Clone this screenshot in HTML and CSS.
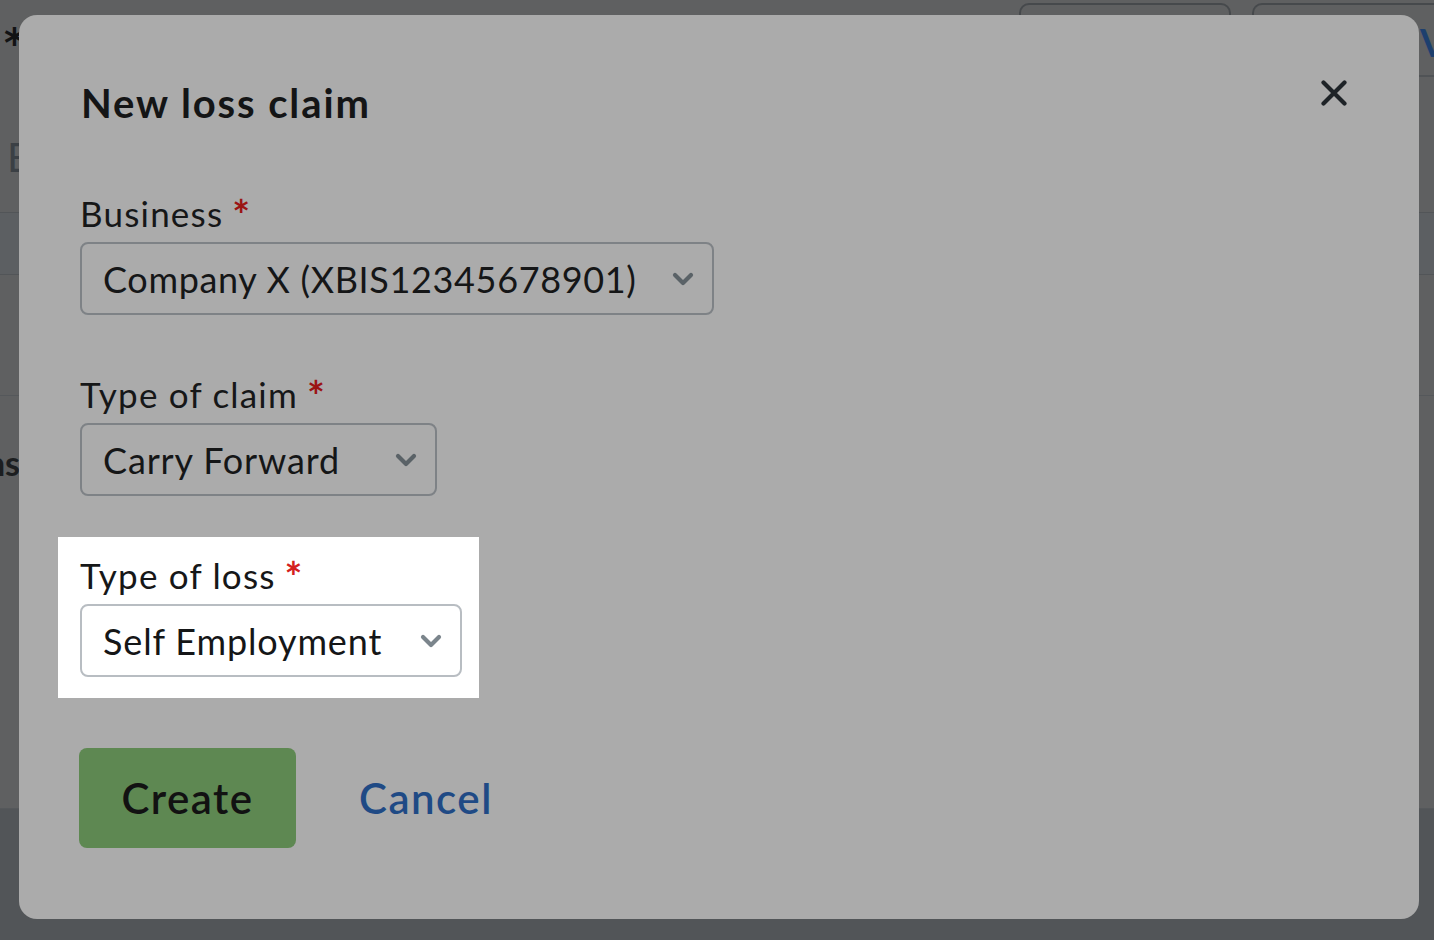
FILE: index.html
```html
<!DOCTYPE html>
<html lang="en">
<head>
    <meta charset="UTF-8">
    <meta name="viewport" content="width=device-width, initial-scale=1.0">
    <title>New loss claim</title>
    <link rel="stylesheet" href="styles.css">
</head>
<body>

<div class="page">
    <div class="page-head">
        <span class="req-mark">*</span>
        <div class="head-actions">
            <span class="ghost-btn">Download</span>
            <span class="ghost-btn link">View claims</span>
        </div>
    </div>
    <div class="page-title">Existing losses</div>
    <div class="table-head"></div>
    <div class="table-row"></div>
    <div class="table-row tall">
        <div class="cut-cell"><span>Actions</span></div>
    </div>
    <div class="page-foot"></div>
</div>

<div class="modal">
    <div class="modal-head">
        <h1>New loss claim</h1>
        <button class="close-btn" aria-label="Close">
            <svg width="26" height="26" viewBox="0 0 26 26">
                <path d="M2.5 2.5 L23.5 23.5 M23.5 2.5 L2.5 23.5" stroke="#1e2327" stroke-width="4.2" stroke-linecap="round" fill="none"/>
            </svg>
        </button>
    </div>

    <div class="field first">
        <label>Business<span class="star">*</span></label>
        <div class="select business">
            <span>Company X (XBIS12345678901)</span>
            <svg class="chevron" width="22" height="14" viewBox="0 0 22 14"><path d="M3 3 L11 11 L19 3" /></svg>
        </div>
    </div>

    <div class="field">
        <label>Type of claim<span class="star">*</span></label>
        <div class="select claim">
            <span>Carry Forward</span>
            <svg class="chevron" width="22" height="14" viewBox="0 0 22 14"><path d="M3 3 L11 11 L19 3" /></svg>
        </div>
    </div>

    <div class="field spotlight">
        <label>Type of loss<span class="star">*</span></label>
        <div class="select loss">
            <span>Self Employment</span>
            <svg class="chevron" width="22" height="14" viewBox="0 0 22 14"><path d="M3 3 L11 11 L19 3" /></svg>
        </div>
    </div>

    <div class="actions">
        <button class="create-btn">Create</button>
        <a class="cancel-link" href="#">Cancel</a>
    </div>
</div>

</body>
</html>
```

FILE: styles.css
```css
body {
    margin: 0;
    padding: 0;
    background-color: #5f6061;
    font-family: Lato, "Open Sans", Arial, sans-serif;
    overflow: hidden;
    height: 940px;
}

/* Page behind the dialog (dimmed) */
.page {
    width: 1434px;
    overflow: hidden;
}

.page-head {
    display: flex;
    align-items: flex-start;
    height: 77px;
    box-sizing: border-box;
    padding-top: 3px;
}

.req-mark {
    color: #121314;
    font-family: "DejaVu Sans", sans-serif;
    font-size: 40px;
    font-weight: bold;
    padding-left: 4px;
    line-height: 40px;
    margin-top: 20px;
}

.head-actions {
    margin-left: auto;
    display: flex;
    gap: 21px;
    margin-right: -40px;
}

.ghost-btn {
    width: 212px;
    height: 74px;
    box-sizing: border-box;
    border: 2px solid #46494c;
    border-radius: 10px;
    color: #2b2e31;
    font-size: 32px;
    padding: 12px 0 0 20px;
}

.ghost-btn.link {
    width: 222px;
    border-radius: 10px 0 0 0;
    border-right: none;
    border-bottom-color: #505356;
    color: #1d3f6e;
    font-weight: bold;
    font-size: 38px;
    padding: 14px 0 0 166px;
    white-space: nowrap;
    overflow: hidden;
}

.page-title {
    height: 135px;
    border-bottom: 1px solid #525558;
    color: #3b4045;
    font-size: 40px;
    line-height: 160px;
    padding-left: 7px;
    white-space: nowrap;
}

.table-head {
    height: 61px;
    background-color: #5c5f62;
    border-bottom: 1px solid #525558;
}

.table-row {
    height: 120px;
    border-bottom: 1px solid #55585b;
}

.table-row.tall {
    height: 412px;
}

.cut-cell {
    width: 20px;
    display: flex;
    justify-content: flex-end;
    overflow: hidden;
    padding-top: 46px;
}

.cut-cell span {
    color: #1c1e20;
    font-size: 34px;
    font-weight: bold;
    white-space: nowrap;
}

.page-foot {
    height: 140px;
    background-color: #525558;
}

/* Dialog */
.modal {
    position: fixed;
    left: 19px;
    top: 15px;
    width: 1400px;
    height: 904px;
    box-sizing: border-box;
    background-color: #ababab;
    border-radius: 18px;
    padding: 64px 62px 0 61px;
    display: flex;
    flex-direction: column;
    align-items: flex-start;
}

.modal-head {
    display: flex;
    align-items: flex-start;
    width: 100%;
}

.modal-head h1 {
    margin: 0 0 0 1px;
    font-size: 40px;
    line-height: 48px;
    font-weight: bold;
    letter-spacing: 1.9px;
    color: #141516;
}

.close-btn {
    margin-left: auto;
    margin-right: 10px;
    margin-top: 1px;
    padding: 0;
    border: none;
    background: none;
    width: 26px;
    height: 26px;
    cursor: pointer;
}

.close-btn svg {
    display: block;
}

.field {
    display: flex;
    flex-direction: column;
    align-items: flex-start;
    margin-top: 59px;
}

.field.first {
    margin-top: 66px;
}

.field label {
    display: block;
    height: 41px;
    font-size: 35px;
    line-height: 41px;
    letter-spacing: 1.2px;
    color: #161718;
    margin-bottom: 8px;
    white-space: nowrap;
}

.star {
    color: #9b1414;
    font-weight: bold;
    font-size: 42px;
    line-height: 0;
    letter-spacing: 0;
    margin-left: 9px;
    vertical-align: -4px;
}

.select {
    display: flex;
    align-items: center;
    height: 73px;
    box-sizing: border-box;
    border: 2px solid #7e8286;
    border-radius: 8px;
    padding: 0 18px 0 21px;
    font-size: 36px;
    letter-spacing: 0.85px;
    color: #151617;
    white-space: nowrap;
}

.select .chevron {
    margin-left: auto;
    fill: none;
    stroke: #5a6267;
    stroke-width: 4.2;
    stroke-linecap: round;
    stroke-linejoin: round;
}

.select.business {
    width: 634px;
    letter-spacing: 0.65px;
}

.select.claim {
    width: 357px;
}

.select.loss {
    width: 382px;
}

/* highlighted field (white spotlight) */
.field.spotlight {
    background-color: #ffffff;
    padding: 18px 17px 21px 22px;
    margin-left: -22px;
    margin-top: 41px;
}

.spotlight .star {
    color: #d42020;
}

.spotlight .select {
    border-color: #b8bdc2;
}

.spotlight .select .chevron {
    stroke: #7b858c;
}

.actions {
    display: flex;
    align-items: center;
    gap: 63px;
    margin-top: 50px;
}

.create-btn {
    width: 217px;
    height: 100px;
    margin-left: -1px;
    border: none;
    border-radius: 8px;
    background-color: #5e8852;
    color: #121212;
    font-family: Lato, "Open Sans", Arial, sans-serif;
    font-size: 42px;
    font-weight: 600;
    letter-spacing: 1.5px;
    cursor: pointer;
}

.cancel-link {
    color: #1f4a85;
    font-size: 42px;
    font-weight: 600;
    letter-spacing: 1.5px;
    text-decoration: none;
}
```
